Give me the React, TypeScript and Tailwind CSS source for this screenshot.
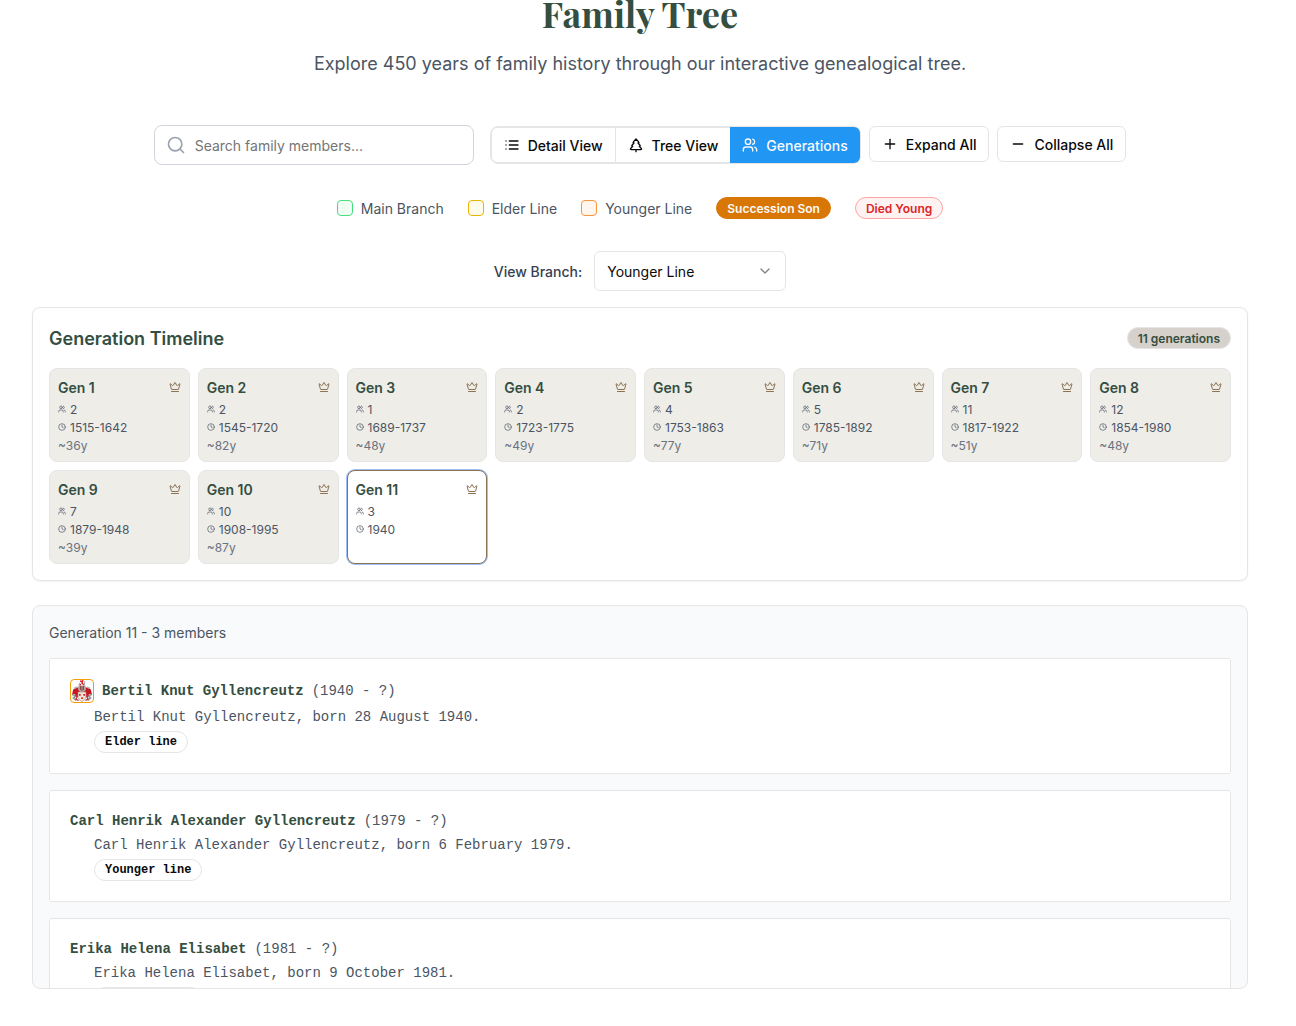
import React from "react";
import { TreePine, Users, Plus, Minus, Search, ChevronDown, Crown, Clock } from "lucide-react";

const generations = [
  { n: 1, count: 2, years: "1515-1642", span: "~36y" },
  { n: 2, count: 2, years: "1545-1720", span: "~82y" },
  { n: 3, count: 1, years: "1689-1737", span: "~48y" },
  { n: 4, count: 2, years: "1723-1775", span: "~49y" },
  { n: 5, count: 4, years: "1753-1863", span: "~77y" },
  { n: 6, count: 5, years: "1785-1892", span: "~71y" },
  { n: 7, count: 11, years: "1817-1922", span: "~51y" },
  { n: 8, count: 12, years: "1854-1980", span: "~48y" },
  { n: 9, count: 7, years: "1879-1948", span: "~39y" },
  { n: 10, count: 10, years: "1908-1995", span: "~87y" },
  { n: 11, count: 3, years: "1940", span: "" },
];

const members = [
  { name: "Bertil Knut Gyllencreutz", dates: "(1940 - ?)", text: "Bertil Knut Gyllencreutz, born 28 August 1940.", line: "Elder line", crest: true },
  { name: "Carl Henrik Alexander Gyllencreutz", dates: "(1979 - ?)", text: "Carl Henrik Alexander Gyllencreutz, born 6 February 1979.", line: "Younger line", crest: false },
  { name: "Erika Helena Elisabet", dates: "(1981 - ?)", text: "Erika Helena Elisabet, born 9 October 1981.", line: "Younger line", crest: false },
];

function ListIcon() {
  return (
    <svg viewBox="0 0 24 24" className="mr-2 h-4 w-4" fill="none" stroke="currentColor" strokeWidth="2" strokeLinecap="round" strokeLinejoin="round">
      <path d="M8 6h13M8 12h13M8 18h13M3 6h.01M3 12h.01M3 18h.01" />
    </svg>
  );
}

function Crest() {
  return (
    <span className="block h-6 w-6 shrink-0 overflow-hidden rounded-[4px] border border-[#f59e0b] bg-white">
      <svg viewBox="0 0 22 22" className="block h-full w-full">
        <path d="M9 1l3 1M12 0l-1 3 2 2M8 4l2 1" stroke="#d3222a" strokeWidth="1.4" fill="none" />
        <path d="M9 3l-1 3M14 1l-1 5" stroke="#a9a9a9" strokeWidth="1" />
        <path d="M2 10q1-3 5-2.500h8q4-.5 5 2.500l1 5-3-1-1 3H5l-1-3-3 1z" fill="#c9151e" />
        <path d="M7.500 5.500h7l.5 4-2 2.500H9l-2-2.500z" fill="#b9a09a" />
        <path d="M9.500 6v4M11 6v5M12.500 6v4" stroke="#6f2c2c" strokeWidth=".7" />
        <path d="M6 7L3 8.500M16 7l3 1.500" stroke="#b5b5b5" strokeWidth="1.400" />
        <path d="M1.500 14.500l3 1.500-2 2 3 2.500M20.500 14.500l-3 1.500 2 2-3 2.500" fill="none" stroke="#9a9a9a" strokeWidth="1.800" />
        <path d="M4.500 15l1.500 2-1 2 2.500 1.500M17.500 15l-1.500 2 1 2-2.500 1.500" fill="none" stroke="#bd2830" strokeWidth="1.200" />
        <path d="M7 12h8v5.500q-.5 2.800-4 4-3.500-1.200-4-4z" fill="#f2e4d6" stroke="#a08e84" strokeWidth=".6" />
        <path d="M8 14h1.700v1.700H8zM12.300 14H14v1.700h-1.700zM10.200 17.300h1.700V19h-1.700z" fill="#d3222a" />
      </svg>
    </span>
  );
}

const badge = "inline-flex items-center rounded-full border px-2.5 text-xs leading-4 font-semibold";
const interBadge = "pt-[3px] pb-px";
const outline = "flex h-9 items-center rounded-md border border-[#e5e5e5] bg-white px-3";

function Legend({ box, label }: { box: string; label: string }) {
  return (
    <div className="flex items-center gap-2">
      <span className={`h-4 w-4 rounded border ${box}`} />
      <span className="pt-0.5 text-[#4b5563]">{label}</span>
    </div>
  );
}

export default function App() {
  return (
    <div className="h-[1026px] w-full overflow-hidden bg-white font-['Inter',sans-serif] text-sm text-[#0a0a0a]">
      <div className="w-[1280px] px-8">
        <h1 className="-mt-[7px] mb-[17px] text-center font-['Playfair_Display','Liberation_Serif',serif] text-4xl leading-10 font-bold text-[#344e41]">
          Family Tree
        </h1>
        <p className="text-center text-lg leading-7 text-[#4b5563]">
          Explore 450 years of family history through our interactive genealogical tree.
        </p>

        <div className="mt-[47px] flex items-center justify-center gap-4">
          <div className="flex h-10 w-80 items-center rounded-lg border border-[#d1d5db] px-[11px]">
            <Search className="h-5 w-5 text-[#9ca3af]" />
            <span className="ml-[9px] pt-0.5 text-[#757575]">Search family members...</span>
          </div>
          <div className="flex items-start gap-2 font-medium">
            <div className="flex rounded-lg border border-[#e5e5e5]">
              <div className="flex h-9 items-center rounded-l-md border border-[#e5e5e5] px-3">
                <ListIcon />
                <span className="pt-0.5">Detail View</span>
              </div>
              <div className="flex h-9 items-center border-y border-[#e5e5e5] px-3">
                <TreePine className="mr-2 h-4 w-4" />
                <span className="pt-0.5">Tree View</span>
              </div>
              <div className="flex h-9 items-center rounded-r-md bg-[#2196f3] px-3 text-[#f8fafc]">
                <Users className="mr-2 h-4 w-4" />
                <span className="pt-0.5">Generations</span>
              </div>
            </div>
            <div className={outline}>
              <Plus className="mr-2 h-4 w-4" />
              <span className="pt-0.5">Expand All</span>
            </div>
            <div className={outline}>
              <Minus className="mr-2 h-4 w-4" />
              <span className="pt-0.5">Collapse All</span>
            </div>
          </div>
        </div>

        <div className="mt-8 flex h-[22px] items-center justify-center gap-6">
          <Legend box="border-[#4ade80] bg-[#f0fdf4]" label="Main Branch" />
          <Legend box="border-[#eab308] bg-[#fefce8]" label="Elder Line" />
          <Legend box="border-[#fb923c] bg-[#fff7ed]" label="Younger Line" />
          <span className={`${badge} ${interBadge} border-[#d97706] bg-[#d97706] text-[#fafafa]`}>Succession Son</span>
          <span className={`${badge} ${interBadge} border-[#fca5a5] bg-[#fef2f2] text-[#dc2626]`}>Died Young</span>
        </div>

        <div className="mt-8 flex items-center justify-center gap-3">
          <span className="pt-0.5 font-medium text-[#374151]">View Branch:</span>
          <div className="flex h-10 w-48 items-center justify-between rounded-md border border-[#e5e5e5] px-3">
            <span className="pt-0.5">Younger Line</span>
            <ChevronDown className="h-4 w-4 opacity-50" />
          </div>
        </div>

        <section className="mt-4 rounded-lg border border-[#e5e5e5] bg-white p-4 shadow-xs">
          <div className="mb-4 flex h-7 items-center justify-between">
            <h2 className="pt-0.5 text-lg leading-7 font-semibold text-[#344e41]">Generation Timeline</h2>
            <span className={`${badge} ${interBadge} border-[#e5e5e5] bg-[#d6d1cb] text-[#344e41]`}>11 generations</span>
          </div>
          <div className="grid grid-cols-8 gap-2">
            {generations.map((g) => (
              <div
                key={g.n}
                className={`h-[94px] rounded-lg border p-2 ${
                  g.n === 11 ? "border-[#8b7355] bg-white ring-1 ring-[#3b82f6]/50" : "border-[#e5e5e5] bg-[#eeede8]"
                }`}
              >
                <div className="mb-1 flex h-5 items-center justify-between font-semibold text-[#344e41]">
                  <span className="pt-0.5">Gen {g.n}</span>
                  <Crown className="h-3 w-3 text-[#8b7355]" />
                </div>
                <div className="space-y-0.5 text-xs leading-4 text-[#4b5563]">
                  <div className="flex h-4 items-center gap-1">
                    <Users className="h-2 w-2" />
                    <span className="pt-0.5">{g.count}</span>
                  </div>
                  <div className="flex h-4 items-center gap-1">
                    <Clock className="h-2 w-2" />
                    <span className="pt-0.5">{g.years}</span>
                  </div>
                  <div className="pt-px text-[#6b7280]">{g.span}</div>
                </div>
              </div>
            ))}
          </div>
        </section>

        <section className="mt-6 h-96 overflow-hidden rounded-lg border border-[#e5e5e5] bg-[#f9fafb] p-4">
          <div className="mb-[15px] pt-px text-[#4b5563]">Generation 11 - 3 members</div>
          <div className="space-y-4 font-['Liberation_Mono',monospace]">
            {members.map((m) => (
              <article key={m.name} className="rounded-[3px] border border-[#e5e5e5] bg-white p-5">
                <div className="flex items-center gap-2">
                  {m.crest && <Crest />}
                  <b className="font-bold text-[#344e41]">{m.name}</b>
                  <span className="text-[#4b5563]">{m.dates}</span>
                </div>
                <div className="mt-1 ml-6 text-[#4b5563]">{m.text}</div>
                <div className="mt-1 ml-6 flex">
                  <span className={`${badge} border-[#e5e5e5] py-0.5`}>{m.line}</span>
                </div>
              </article>
            ))}
          </div>
        </section>
      </div>
    </div>
  );
}
